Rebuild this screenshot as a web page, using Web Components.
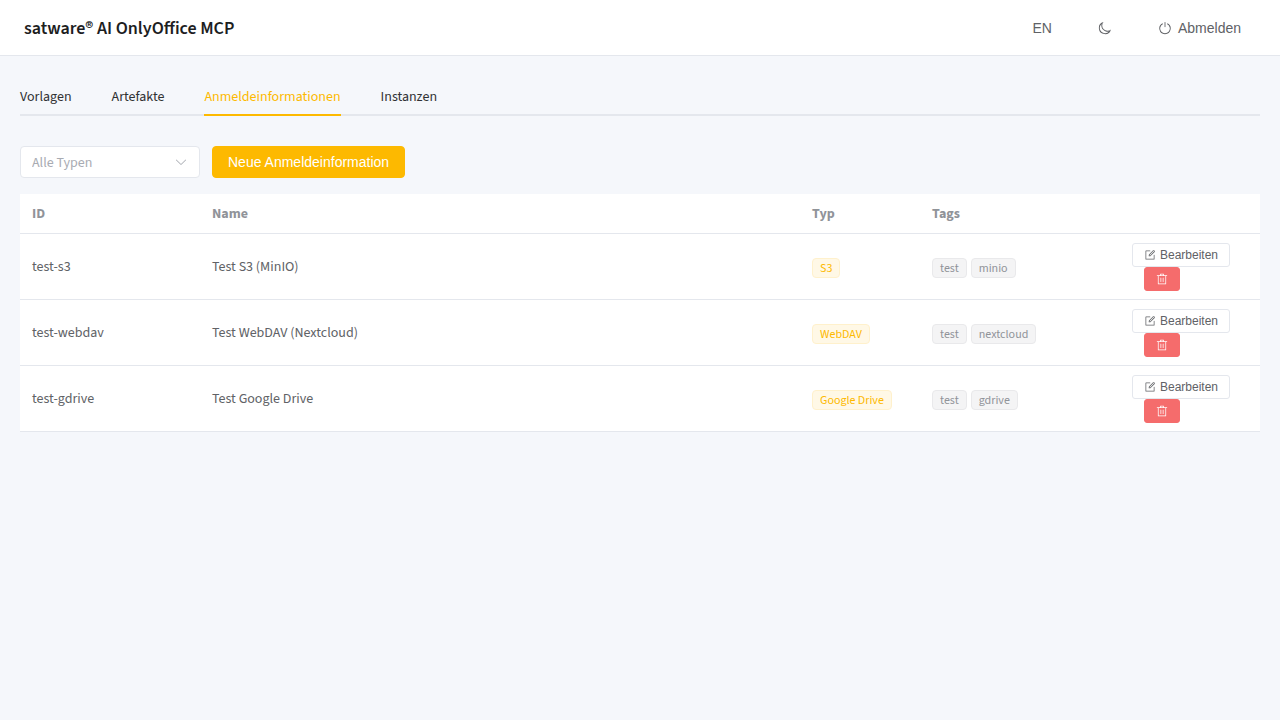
<!DOCTYPE html>
<html lang="de">
<head>
<meta charset="utf-8">
<meta name="viewport" content="width=device-width, initial-scale=1">
<title>satware® AI OnlyOffice MCP</title>
<style>
    :root {
        --color-primary: #fdb900;
        --color-primary-border: #fff1cc;
        --color-primary-bg: #fff8e6;
        --color-danger: #f56c6c;
        --color-info: #909399;
        --color-placeholder: #a8abb2;
        --text-primary: #303133;
        --text-regular: #606266;
        --border-light: #e4e7ed;
        --font-ui: "Liberation Sans", Arial, sans-serif;
        --font-text: "Source Sans 3", "Noto Sans CJK SC", sans-serif;
    }

    body {
        margin: 0;
        min-height: 100vh;
        background: #f5f7fb;
        color: var(--text-regular);
        font-family: var(--font-text);
        font-size: 14px;
    }
</style>
</head>
<body>
<app-shell>
    <app-header slot="header">
        satware® AI OnlyOffice MCP
        <app-button slot="actions" variant="text">EN</app-button>
        <app-button slot="actions" variant="text" icon="moon" label="Dunkelmodus"></app-button>
        <app-button slot="actions" variant="text" icon="power">Abmelden</app-button>
    </app-header>

    <tab-bar>
        <tab-item>Vorlagen</tab-item>
        <tab-item>Artefakte</tab-item>
        <tab-item active>Anmeldeinformationen</tab-item>
        <tab-item>Instanzen</tab-item>
    </tab-bar>

    <tool-bar>
        <type-filter></type-filter>
        <app-button variant="primary">Neue Anmeldeinformation</app-button>
    </tool-bar>

    <credentials-table></credentials-table>
</app-shell>

<script>
const ICONS = {
    "arrow-down": ["M831.872 340.864 512 652.672 192.128 340.864a30.592 30.592 0 0 0-42.752 0 29.12 29.12 0 0 0 0 41.6L489.664 714.24a32 32 0 0 0 44.672 0l340.288-331.712a29.12 29.12 0 0 0 0-41.728 30.592 30.592 0 0 0-42.752 0z"],
    moon: ["M240.448 240.448a384 384 0 1 0 559.424 525.696 448 448 0 0 1-542.016-542.08 390.592 390.592 0 0 0-17.408 16.384zm181.056 362.048a384 384 0 0 0 525.632 16.384A448 448 0 1 1 405.056 76.8a384 384 0 0 0 16.448 525.696z"],
    power: [
        "M352 159.872V230.4a352 352 0 1 0 320 0v-70.528A416.128 416.128 0 0 1 512 960a416 416 0 0 1-160-800.128z",
        "M512 64q32 0 32 32v320q0 32-32 32t-32-32V96q0-32 32-32z"
    ],
    edit: [
        "M832 512a32 32 0 1 1 64 0v352a32 32 0 0 1-32 32H160a32 32 0 0 1-32-32V160a32 32 0 0 1 32-32h352a32 32 0 0 1 0 64H192v640h640V512z",
        "m469.952 554.24 52.8-7.552L847.104 222.4a32 32 0 1 0-45.248-45.248L477.44 501.44l-7.552 52.8zm422.4-422.4a96 96 0 0 1 0 135.808l-331.84 331.84a32 32 0 0 1-18.112 9.088L436.8 623.68a32 32 0 0 1-36.224-36.224l15.104-105.6a32 32 0 0 1 9.024-18.112l331.904-331.84a96 96 0 0 1 135.744 0z"
    ],
    trash: ["M160 256H96a32 32 0 0 1 0-64h256V95.936a32 32 0 0 1 32-32h256a32 32 0 0 1 32 32V192h256a32 32 0 1 1 0 64h-64v672a32 32 0 0 1-32 32H192a32 32 0 0 1-32-32V256zm448-64v-64H416v64h192zM224 896h576V256H224v640zm192-128a32 32 0 0 1-32-32V416a32 32 0 0 1 64 0v320a32 32 0 0 1-32 32zm192 0a32 32 0 0 1-32-32V416a32 32 0 0 1 64 0v320a32 32 0 0 1-32 32z"]
};

class AppIcon extends HTMLElement {
    constructor() {
        super();
        this.attachShadow({ mode: "open" });
    }

    connectedCallback() {
        const paths = ICONS[this.getAttribute("name")] || [];
        this.shadowRoot.innerHTML = `
        <style>
            :host { display: inline-flex; width: 1em; height: 1em; flex: none; }
            svg { width: 100%; height: 100%; fill: currentColor; }
        </style>
        <svg viewBox="0 0 1024 1024" aria-hidden="true">${paths.map(d => `<path d="${d}"/>`).join("")}</svg>
        `;
    }
}

customElements.define("app-icon", AppIcon);

class AppButton extends HTMLElement {
    constructor() {
        super();
        this.attachShadow({ mode: "open" });
    }

    connectedCallback() {
        const icon = this.getAttribute("icon");
        const label = this.getAttribute("label");
        this.shadowRoot.innerHTML = `
        <style>
            :host { display: inline-flex; vertical-align: middle; }

            button {
                display: inline-flex;
                align-items: center;
                justify-content: center;
                gap: 6px;
                height: 32px;
                padding: 0 15px;
                border: 1px solid var(--border-light);
                border-radius: 4px;
                background: #fff;
                color: var(--text-regular);
                font: 14px/1 var(--font-ui);
                white-space: nowrap;
                cursor: pointer;
            }

            :host([size="small"]) button {
                gap: 4px;
                height: 24px;
                padding: 0 11px;
                border-radius: 3px;
                font-size: 12px;
            }

            :host([variant="text"]) button {
                border-color: transparent;
                background: transparent;
            }

            :host([variant="primary"]) button {
                border-color: var(--color-primary);
                background: var(--color-primary);
                color: #fff;
            }

            :host([variant="danger"]) button {
                border-color: var(--color-danger);
                background: var(--color-danger);
                color: #fff;
            }
        </style>
        <button type="button"${label ? ` aria-label="${label}"` : ""}>${icon ? `<app-icon name="${icon}"></app-icon>` : ""}${label ? "" : "<span><slot></slot></span>"}</button>
        `;
    }
}

customElements.define("app-button", AppButton);

class AppShell extends HTMLElement {
    constructor() {
        super();
        this.attachShadow({ mode: "open" });
        this.shadowRoot.innerHTML = `
        <style>
            :host { display: block; }
            main { padding: 20px; }
        </style>
        <slot name="header"></slot>
        <main><slot></slot></main>
        `;
    }
}

customElements.define("app-shell", AppShell);

class AppHeader extends HTMLElement {
    constructor() {
        super();
        this.attachShadow({ mode: "open" });
        this.shadowRoot.innerHTML = `
        <style>
            :host { display: block; }

            header {
                display: flex;
                align-items: center;
                justify-content: space-between;
                height: 55px;
                padding: 0 23px 0 24px;
                border-bottom: 1px solid var(--border-light);
                background: #fff;
            }

            h1 {
                margin: 0;
                padding-top: 2px;
                color: #1d1e1f;
                font-size: 18px;
                font-weight: 600;
                line-height: 24px;
            }

            .actions { display: flex; gap: 14px; }
        </style>
        <header>
            <h1><slot></slot></h1>
            <div class="actions"><slot name="actions"></slot></div>
        </header>
        `;
    }
}

customElements.define("app-header", AppHeader);

class TabBar extends HTMLElement {
    constructor() {
        super();
        this.attachShadow({ mode: "open" });
        this.shadowRoot.innerHTML = `
        <style>
            :host { display: block; margin-bottom: 30px; }

            nav {
                display: flex;
                gap: 40px;
                box-shadow: inset 0 -2px var(--border-light);
            }
        </style>
        <nav><slot></slot></nav>
        `;
    }
}

customElements.define("tab-bar", TabBar);

class TabItem extends HTMLElement {
    constructor() {
        super();
        this.attachShadow({ mode: "open" });
        this.shadowRoot.innerHTML = `
        <style>
            :host { display: block; }

            a {
                display: block;
                height: 38px;
                border-bottom: 2px solid transparent;
                color: var(--text-primary);
                line-height: 42px;
                text-decoration: none;
            }

            :host([active]) a {
                border-color: var(--color-primary);
                color: var(--color-primary);
            }
        </style>
        <a href="#"><slot></slot></a>
        `;
    }
}

customElements.define("tab-item", TabItem);

class ToolBar extends HTMLElement {
    constructor() {
        super();
        this.attachShadow({ mode: "open" });
        this.shadowRoot.innerHTML = `
        <style>
            :host { display: flex; gap: 12px; margin-bottom: 16px; }
        </style>
        <slot></slot>
        `;
    }
}

customElements.define("tool-bar", ToolBar);

class TypeFilter extends HTMLElement {
    constructor() {
        super();
        this.attachShadow({ mode: "open" });
        this.shadowRoot.innerHTML = `
        <style>
            :host { display: grid; width: 180px; align-items: center; }

            select, app-icon { grid-area: 1 / 1; }

            select {
                appearance: none;
                width: 100%;
                height: 32px;
                padding: 2px 30px 0 11px;
                border: 1px solid var(--border-light);
                border-radius: 4px;
                background: #fff;
                color: var(--color-placeholder);
                font: 14px/24px var(--font-text);
            }

            app-icon {
                justify-self: end;
                margin-right: 12px;
                color: var(--color-placeholder);
                pointer-events: none;
            }
        </style>
        <select aria-label="Typ">
            <option>Alle Typen</option>
            <option>S3</option>
            <option>WebDAV</option>
            <option>Google Drive</option>
        </select>
        <app-icon name="arrow-down"></app-icon>
        `;
    }
}

customElements.define("type-filter", TypeFilter);

class AppTag extends HTMLElement {
    constructor() {
        super();
        this.attachShadow({ mode: "open" });
        this.shadowRoot.innerHTML = `
        <style>
            :host {
                display: inline-flex;
                align-items: center;
                box-sizing: border-box;
                height: 20px;
                padding: 2px 7px 0;
                border: 1px solid #e9e9eb;
                border-radius: 4px;
                background: #f4f4f5;
                color: var(--color-info);
                font-size: 12px;
                line-height: 1;
                white-space: nowrap;
            }

            :host([type="primary"]) {
                border-color: var(--color-primary-border);
                background: var(--color-primary-bg);
                color: var(--color-primary);
            }
        </style>
        <slot></slot>
        `;
    }
}

customElements.define("app-tag", AppTag);

class CredentialsTable extends HTMLElement {
    constructor() {
        super();
        this.attachShadow({ mode: "open" });
        this.items = [
            { id: "test-s3", name: "Test S3 (MinIO)", type: "S3", tags: ["test", "minio"] },
            { id: "test-webdav", name: "Test WebDAV (Nextcloud)", type: "WebDAV", tags: ["test", "nextcloud"] },
            { id: "test-gdrive", name: "Test Google Drive", type: "Google Drive", tags: ["test", "gdrive"] }
        ];
    }

    connectedCallback() { this.render(); }

    renderRow(item) {
        return `
            <tr>
                <td>${item.id}</td>
                <td>${item.name}</td>
                <td><div class="tags"><app-tag type="primary">${item.type}</app-tag></div></td>
                <td><div class="tags">${item.tags.map(t => `<app-tag>${t}</app-tag>`).join("")}</div></td>
                <td>
                    <div class="actions">
                        <app-button size="small" icon="edit">Bearbeiten</app-button>
                        <app-button class="delete" size="small" variant="danger" icon="trash" label="Löschen"></app-button>
                    </div>
                </td>
            </tr>`;
    }

    render() {
        this.shadowRoot.innerHTML = `
        <style>
            :host { display: block; }

            table {
                width: 100%;
                table-layout: fixed;
                border-collapse: separate;
                border-spacing: 0;
                background: #fff;
                line-height: 23px;
            }

            .id { width: 180px; }
            .type { width: 120px; }
            .tag-list { width: 200px; }
            .buttons { width: 140px; }

            th, td {
                padding: 9px 12px 7px;
                border-bottom: 1px solid var(--border-light);
                text-align: left;
                vertical-align: middle;
            }

            td { padding-bottom: 8px; }

            th {
                color: var(--color-info);
                font-weight: 700;
            }

            .tags { display: flex; gap: 4px; padding-top: 2px; }
            .actions { display: flex; flex-wrap: wrap; }
            .delete { margin-left: 12px; }
        </style>
        <table>
            <colgroup>
                <col class="id"><col><col class="type"><col class="tag-list"><col class="buttons">
            </colgroup>
            <thead>
                <tr><th>ID</th><th>Name</th><th>Typ</th><th>Tags</th><th></th></tr>
            </thead>
            <tbody>${this.items.map(item => this.renderRow(item)).join("")}</tbody>
        </table>
        `;
    }
}

customElements.define("credentials-table", CredentialsTable);
</script>
</body>
</html>
